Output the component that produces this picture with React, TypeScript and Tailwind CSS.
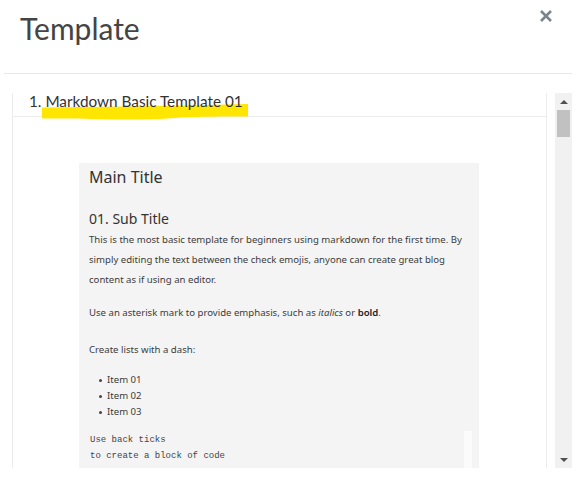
import React from "react";

const para = [
	"This is the most basic template for beginners using markdown for the first time. By",
	"simply editing the text between the check emojis, anyone can create great blog",
	"content as if using an editor.",
];

function Highlight() {
	return (
		<svg
			className="absolute left-[29px] top-[11px] pointer-events-none"
			width="208"
			height="20"
			viewBox="0 0 208 20"
		>
			<path
				d="M0 3.5 C40 3 80 2.5 120 2 C150 1.5 180 0.5 206 0 L206 12.5 C180 12.5 160 12.5 140 13.5 C110 16 80 16 50 15 C30 14.5 15 14.5 0 14.5 Z"
				fill="#ffe600"
			/>
		</svg>
	);
}

function Scrollbar() {
	return (
		<div className="w-[17px] shrink-0 bg-[#f1f1f1] flex flex-col items-center">
			<div className="h-[17px] w-full flex items-center justify-center">
				<div className="w-0 h-0 border-l-[4px] border-r-[4px] border-b-[4px] border-l-transparent border-r-transparent border-b-[#505050]" />
			</div>
			<div className="w-[13px] h-[27px] bg-[#c1c1c1]" />
			<div className="flex-1" />
			<div className="h-[17px] w-full flex items-center justify-center">
				<div className="w-0 h-0 border-l-[4px] border-r-[4px] border-t-[4px] border-l-transparent border-r-transparent border-t-[#505050]" />
			</div>
		</div>
	);
}

function Preview() {
	return (
		<div
			className="ml-[66px] mt-[46px] w-[400px] bg-[#f4f4f4] pl-[10px] pt-[2px] text-[#333]"
			style={{ fontFamily: '"Noto Sans", "Open Sans", sans-serif' }}
		>
			<div className="text-[16px] leading-[24px]">Main Title</div>
			<div className="mt-[20px] text-[14px] leading-[20px]">01. Sub Title</div>
			<div className="mt-[1px] text-[9.6px] leading-[20px] text-[#3c3c3c] whitespace-nowrap">
				{para.map((l, i) => (
					<div key={i}>{l}</div>
				))}
			</div>
			<div className="mt-[13px] text-[9.6px] leading-[20px] text-[#3c3c3c] whitespace-nowrap">
				Use an asterisk mark to provide emphasis, such as <i>italics</i> or{" "}
				<b className="font-semibold text-[#222]">bold</b>.
			</div>
			<div className="mt-[17px] text-[9.6px] leading-[20px] text-[#3c3c3c]">
				Create lists with a dash:
			</div>
			<ul className="mt-[12px] pl-[10px] text-[9.6px] leading-[16px] text-[#3c3c3c]">
				{["Item 01", "Item 02", "Item 03"].map((t) => (
					<li key={t} className="flex items-center gap-[5px]">
						<span className="w-[3px] h-[3px] rounded-full bg-[#444]" />
						{t}
					</li>
				))}
			</ul>
			<div className="mt-[11px] mr-[7px] flex border-b border-[#ededed]">
				<pre
					className="flex-1 pl-[1px] pt-[1px] pb-[6px] text-[9px] leading-[16px] text-[#444]"
					style={{ fontFamily: '"Liberation Mono", "DejaVu Sans Mono", monospace' }}
				>
					{"Use back ticks\nto create a block of code"}
				</pre>
				<div className="w-[8px] bg-[#fbfbfb]" />
			</div>
		</div>
	);
}

export default function App() {
	return (
		<div
			className="w-[576px] h-[479px] bg-white overflow-hidden text-[#333]"
			style={{ fontFamily: '"Lato", "Open Sans", sans-serif' }}
		>
			<div className="relative h-[73px] pl-[20px] pt-[8px]">
				<h1 className="text-[30px] leading-[40px] text-[#444]">Template</h1>
				<button className="absolute right-[22px] top-[8px] text-[#7b848e]">
					<svg width="16" height="16" viewBox="0 0 16 16">
						<path d="M3 3 L13 13 M13 3 L3 13" stroke="currentColor" strokeWidth="2.6" />
					</svg>
				</button>
			</div>
			<div className="mx-[4px] border-t border-[#e8e8e8]" />
			<div className="mt-[19px] h-[375px] flex pl-[12px] pr-[4px]">
				<div className="flex-1 border-l border-r border-[#ececec] overflow-hidden">
					<div className="relative h-[24px] border-b border-[#ececec] pl-[16px] text-[15.3px] leading-[17px] text-[#333]">
						<Highlight />
						<span className="relative">1. Markdown Basic Template 01</span>
					</div>
					<Preview />
				</div>
				<div className="w-[8px] shrink-0" />
				<Scrollbar />
			</div>
		</div>
	);
}
